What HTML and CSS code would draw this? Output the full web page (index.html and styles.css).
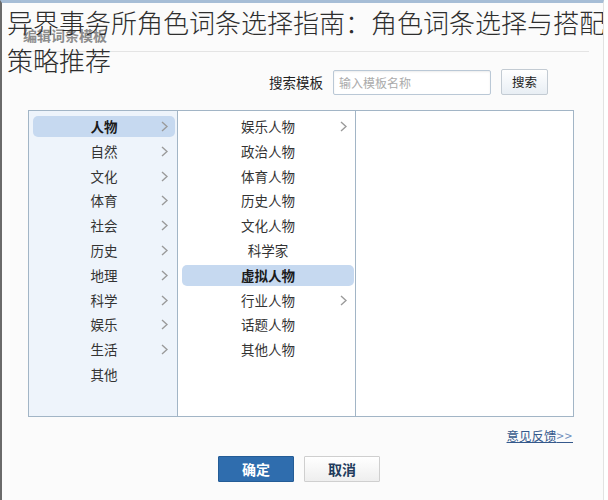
FILE: index.html
```html
<!DOCTYPE html>
<html lang="zh-CN">
<head>
<meta charset="utf-8">
<title>编辑词条模板</title>
<link rel="stylesheet" href="styles.css">
</head>
<body>
<div class="page">
  <div class="dialog-header"><span class="dialog-title">编辑词条模板</span></div>
  <div class="search-row">
    <span class="search-label">搜索模板</span>
    <input class="search-input" type="text" placeholder="输入模板名称">
    <button class="search-btn">搜索</button>
  </div>
  <div class="panel">
    <div class="col col-left">
      <div class="item active">人物<svg class="chev" viewBox="0 0 7 11"><polyline points="1,1 6,5.5 1,10"/></svg></div>
      <div class="item">自然<svg class="chev" viewBox="0 0 7 11"><polyline points="1,1 6,5.5 1,10"/></svg></div>
      <div class="item">文化<svg class="chev" viewBox="0 0 7 11"><polyline points="1,1 6,5.5 1,10"/></svg></div>
      <div class="item">体育<svg class="chev" viewBox="0 0 7 11"><polyline points="1,1 6,5.5 1,10"/></svg></div>
      <div class="item">社会<svg class="chev" viewBox="0 0 7 11"><polyline points="1,1 6,5.5 1,10"/></svg></div>
      <div class="item">历史<svg class="chev" viewBox="0 0 7 11"><polyline points="1,1 6,5.5 1,10"/></svg></div>
      <div class="item">地理<svg class="chev" viewBox="0 0 7 11"><polyline points="1,1 6,5.5 1,10"/></svg></div>
      <div class="item">科学<svg class="chev" viewBox="0 0 7 11"><polyline points="1,1 6,5.5 1,10"/></svg></div>
      <div class="item">娱乐<svg class="chev" viewBox="0 0 7 11"><polyline points="1,1 6,5.5 1,10"/></svg></div>
      <div class="item">生活<svg class="chev" viewBox="0 0 7 11"><polyline points="1,1 6,5.5 1,10"/></svg></div>
      <div class="item">其他</div>
    </div>
    <div class="col col-mid">
      <div class="item">娱乐人物<svg class="chev" viewBox="0 0 7 11"><polyline points="1,1 6,5.5 1,10"/></svg></div>
      <div class="item">政治人物</div>
      <div class="item">体育人物</div>
      <div class="item">历史人物</div>
      <div class="item">文化人物</div>
      <div class="item">科学家</div>
      <div class="item active">虚拟人物</div>
      <div class="item">行业人物<svg class="chev" viewBox="0 0 7 11"><polyline points="1,1 6,5.5 1,10"/></svg></div>
      <div class="item">话题人物</div>
      <div class="item">其他人物</div>
    </div>
    <div class="col col-right"></div>
  </div>
  <div class="feedback-row"><a class="feedback" href="#">意见反馈<span class="arrows">&gt;&gt;</span></a></div>
  <div class="btn-row">
    <button class="btn btn-primary">确定</button>
    <button class="btn btn-default">取消</button>
  </div>
  <h1 class="overlay-title"><span class="title-line">异界事务所角色词条选择指南：角色词条选择与搭配</span><span class="title-line">策略推荐</span></h1>
</div>
</body>
</html>
```
FILE: styles.css
```css
* { box-sizing: border-box; }
html, body {
  margin: 0;
  padding: 0;
  background: #ffffff;
}
body {
  font-family: "Noto Sans CJK SC", "Noto Sans", sans-serif;
  color: #333;
}
.page {
  position: relative;
  width: 604px;
  height: 500px;
  background: #fbfbfb;
  border-top: 3px solid #a6bdd6;
  border-left: 2px solid #6a6a6a;
  border-right: 1px solid #e2e2e2;
  overflow: hidden;
}
.dialog-header {
  height: 49px;
  margin: 0 14px 0 18px;
  padding: 25px 0 0 3px;
  border-bottom: 1px solid #e4e4e4;
}
.dialog-title {
  display: block;
  font-size: 14px;
  line-height: 15px;
  font-weight: bold;
  color: #8c8c8c;
}
.search-row {
  display: flex;
  justify-content: flex-end;
  align-items: center;
  gap: 10px;
  margin-top: 17px;
  padding-right: 55px;
  height: 26px;
}
.search-label {
  font-size: 13.5px;
  color: #222;
  line-height: 14px;
}
.search-input {
  width: 158px;
  height: 25px;
  border: 1px solid #bac8d6;
  border-radius: 2px;
  background: #fff;
  box-shadow: inset 0 1px 2px rgba(0,0,0,0.08);
  padding: 0 5px;
  font-family: "Noto Sans CJK SC", sans-serif;
  font-size: 12px;
  color: #333;
  outline: none;
}
.search-input::placeholder { color: #ababab; }
.search-btn {
  width: 47px;
  height: 26px;
  border: 1px solid #c3cbd3;
  border-radius: 2px;
  background: linear-gradient(#ffffff, #e8eef4);
  font-family: "Noto Sans CJK SC", sans-serif;
  font-size: 12.5px;
  line-height: 14px;
  color: #222;
  padding: 0;
}
.panel {
  display: flex;
  margin: 15px 0 0 26px;
  width: 546px;
  height: 307px;
  border: 1px solid #a2b5c6;
  background: #fff;
}
.col {
  display: flex;
  flex-direction: column;
  gap: 3.8px;
  padding-top: 5px;
}
.col-left {
  width: 149px;
  background: #eef4fb;
  border-right: 1px solid #a2b5c6;
  padding-left: 4px;
  padding-right: 2px;
}
.col-mid {
  width: 178px;
  border-right: 1px solid #a2b5c6;
  padding-left: 4px;
  padding-right: 1px;
}
.col-right { flex: 1; }
.item {
  position: relative;
  height: 21px;
  line-height: 21px;
  text-align: center;
  font-size: 13.5px;
  color: #333;
  border-radius: 5px;
}
.item.active {
  background: #c6d9f0;
  font-weight: bold;
  color: #1a1a1a;
}
.chev {
  position: absolute;
  right: 7px;
  top: 5px;
  width: 7px;
  height: 11px;
  fill: none;
  stroke: #9a9a9a;
  stroke-width: 1.4;
}
.feedback-row {
  display: flex;
  justify-content: flex-end;
  margin-top: 11px;
  padding-right: 30px;
  line-height: 16px;
}
.feedback {
  font-size: 12.5px;
  color: #35598c;
  text-decoration: underline;
}
.arrows { color: #6f8fbd; font-size: 13px; letter-spacing: 1px; }
.btn-row {
  display: flex;
  justify-content: center;
  gap: 10px;
  margin-top: 12px;
  padding-right: 7px;
}
.btn {
  width: 76px;
  height: 26px;
  padding: 0;
  font-family: "Noto Sans CJK SC", sans-serif;
  font-size: 14px;
  font-weight: bold;
  border-radius: 1px;
}
.btn-primary {
  background: #2f6dae;
  border: 1px solid #245c96;
  color: #ffffff;
}
.btn-default {
  background: linear-gradient(#ffffff, #eeeeee);
  border: 1px solid #cfcfcf;
  color: #1f3b5c;
}
.overlay-title {
  position: absolute;
  top: 0;
  left: 5px;
  margin: 0;
  font-size: 26px;
  line-height: 38px;
  font-weight: 300;
  color: #2e2e2e;
}
.title-line {
  display: block;
  width: fit-content;
  white-space: nowrap;
}
```
